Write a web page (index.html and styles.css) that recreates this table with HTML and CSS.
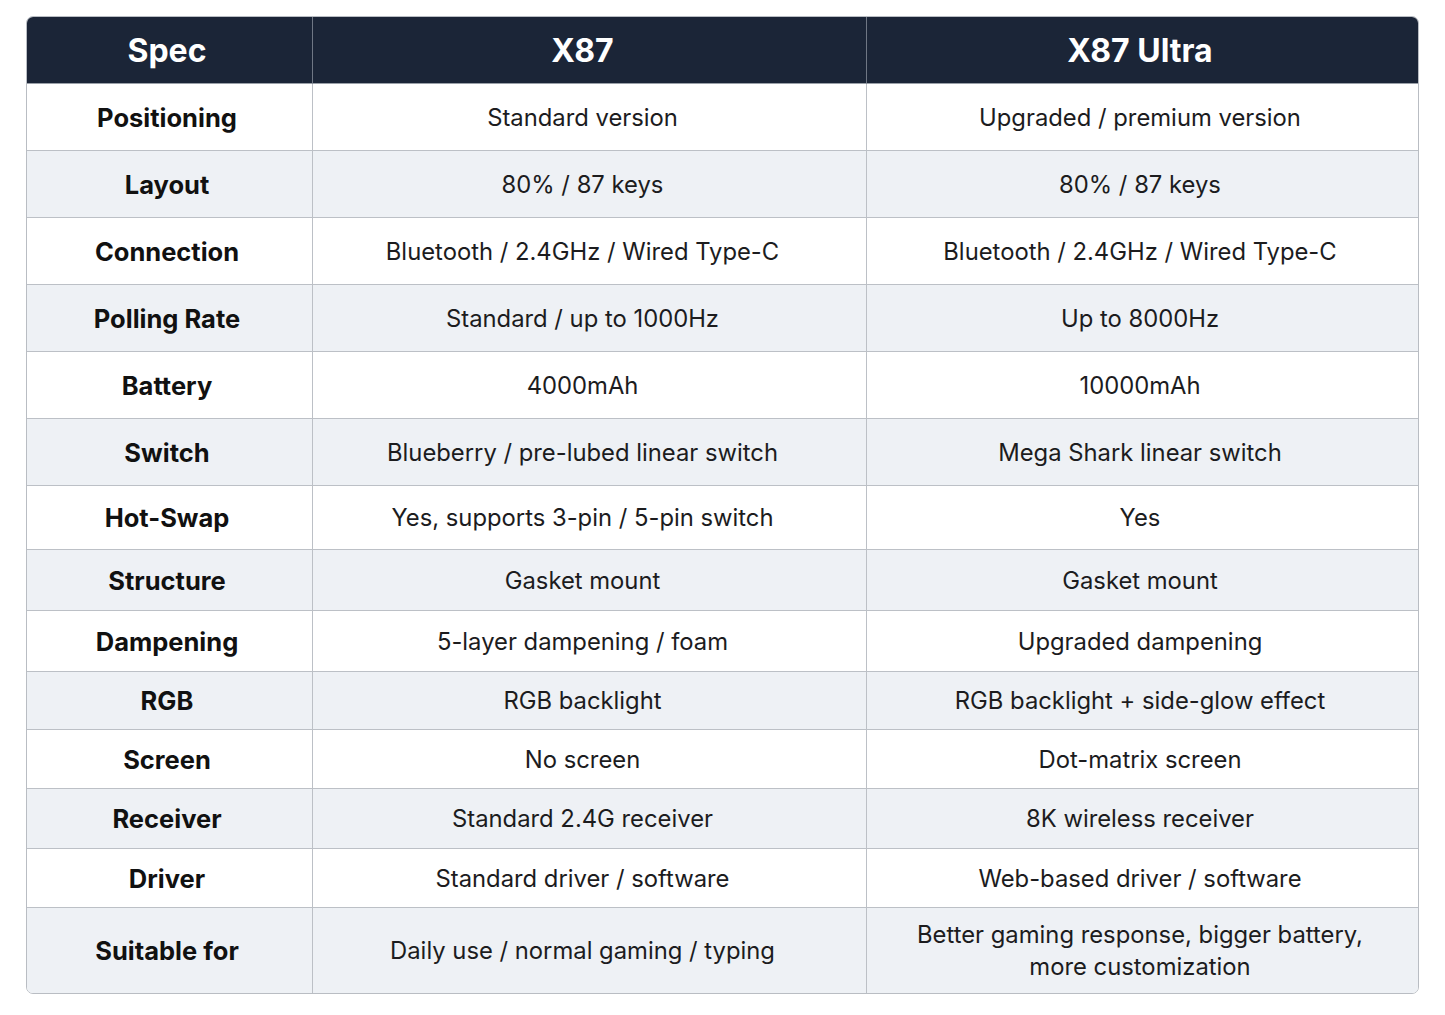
FILE: index.html
```html
<!DOCTYPE html>
<html lang="en">
<head>
<meta charset="utf-8">
<title>X87 vs X87 Ultra</title>
<link rel="stylesheet" href="styles.css">
</head>
<body>
<div class="spec-table">
  <div class="cell head c1">Spec</div>
  <div class="cell head c2">X87</div>
  <div class="cell head last">X87 Ultra</div>

  <div class="cell label c1">Positioning</div>
  <div class="cell c2">Standard version</div>
  <div class="cell last">Upgraded / premium version</div>

  <div class="cell label alt c1">Layout</div>
  <div class="cell alt c2">80% / 87 keys</div>
  <div class="cell alt last">80% / 87 keys</div>

  <div class="cell label c1">Connection</div>
  <div class="cell c2">Bluetooth / 2.4GHz / Wired Type-C</div>
  <div class="cell last">Bluetooth / 2.4GHz / Wired Type-C</div>

  <div class="cell label alt c1">Polling Rate</div>
  <div class="cell alt c2">Standard / up to 1000Hz</div>
  <div class="cell alt last">Up to 8000Hz</div>

  <div class="cell label c1">Battery</div>
  <div class="cell c2">4000mAh</div>
  <div class="cell last">10000mAh</div>

  <div class="cell label alt c1">Switch</div>
  <div class="cell alt c2">Blueberry / pre-lubed linear switch</div>
  <div class="cell alt last">Mega Shark linear switch</div>

  <div class="cell label c1">Hot-Swap</div>
  <div class="cell c2">Yes, supports 3-pin / 5-pin switch</div>
  <div class="cell last">Yes</div>

  <div class="cell label alt c1">Structure</div>
  <div class="cell alt c2">Gasket mount</div>
  <div class="cell alt last">Gasket mount</div>

  <div class="cell label c1">Dampening</div>
  <div class="cell c2">5-layer dampening / foam</div>
  <div class="cell last">Upgraded dampening</div>

  <div class="cell label alt c1">RGB</div>
  <div class="cell alt c2">RGB backlight</div>
  <div class="cell alt last">RGB backlight + side-glow effect</div>

  <div class="cell label c1">Screen</div>
  <div class="cell c2">No screen</div>
  <div class="cell last">Dot-matrix screen</div>

  <div class="cell label alt c1">Receiver</div>
  <div class="cell alt c2">Standard 2.4G receiver</div>
  <div class="cell alt last">8K wireless receiver</div>

  <div class="cell label c1">Driver</div>
  <div class="cell c2">Standard driver / software</div>
  <div class="cell last">Web-based driver / software</div>

  <div class="cell label alt bottom c1">Suitable for</div>
  <div class="cell alt bottom c2">Daily use / normal gaming / typing</div>
  <div class="cell alt last bottom">Better gaming response, bigger battery,<br>more customization</div>
</div>
</body>
</html>
```

FILE: styles.css
```css
* { box-sizing: border-box; }

html, body {
  margin: 0;
  background: #ffffff;
}

body {
  padding: 16px 0 0 26px;
  font-family: "Inter", "Liberation Sans", sans-serif;
}

.spec-table {
  width: 1393px;
  display: grid;
  grid-template-columns: 286px 554px 551px;
  grid-template-rows: 67px 67px 67px 67px 67px 67px 67px 64px 61px 61px 58px 59px 60px 59px 85px;
  border: 1px solid #b9bdc3;
  border-radius: 7px;
  overflow: hidden;
  background: #ffffff;
}

.cell {
  display: flex;
  align-items: center;
  justify-content: center;
  text-align: center;
  border-right: 1px solid #bcc0c6;
  border-bottom: 1px solid #bcc0c6;
  font-size: 23.8px;
  line-height: 32px;
  color: #1c1c1e;
  background: #ffffff;
  padding-top: 1px;
}

.cell.c1 { padding-right: 5px; }
.cell.c2 { padding-right: 14px; }
.cell.last { padding-right: 5px; }

.cell.last { border-right: none; }
.cell.bottom { border-bottom: none; }
.cell.alt { background: #eef1f5; }

.cell.head {
  background: #1b2537;
  color: #ffffff;
  font-weight: 700;
  font-size: 32px;
  border-right-color: #6f7784;
  border-bottom-color: #9aa0a8;
}
.cell.head.last { border-right: none; }

.cell.label {
  font-weight: 700;
  font-size: 25.5px;
  color: #111111;
}
```
